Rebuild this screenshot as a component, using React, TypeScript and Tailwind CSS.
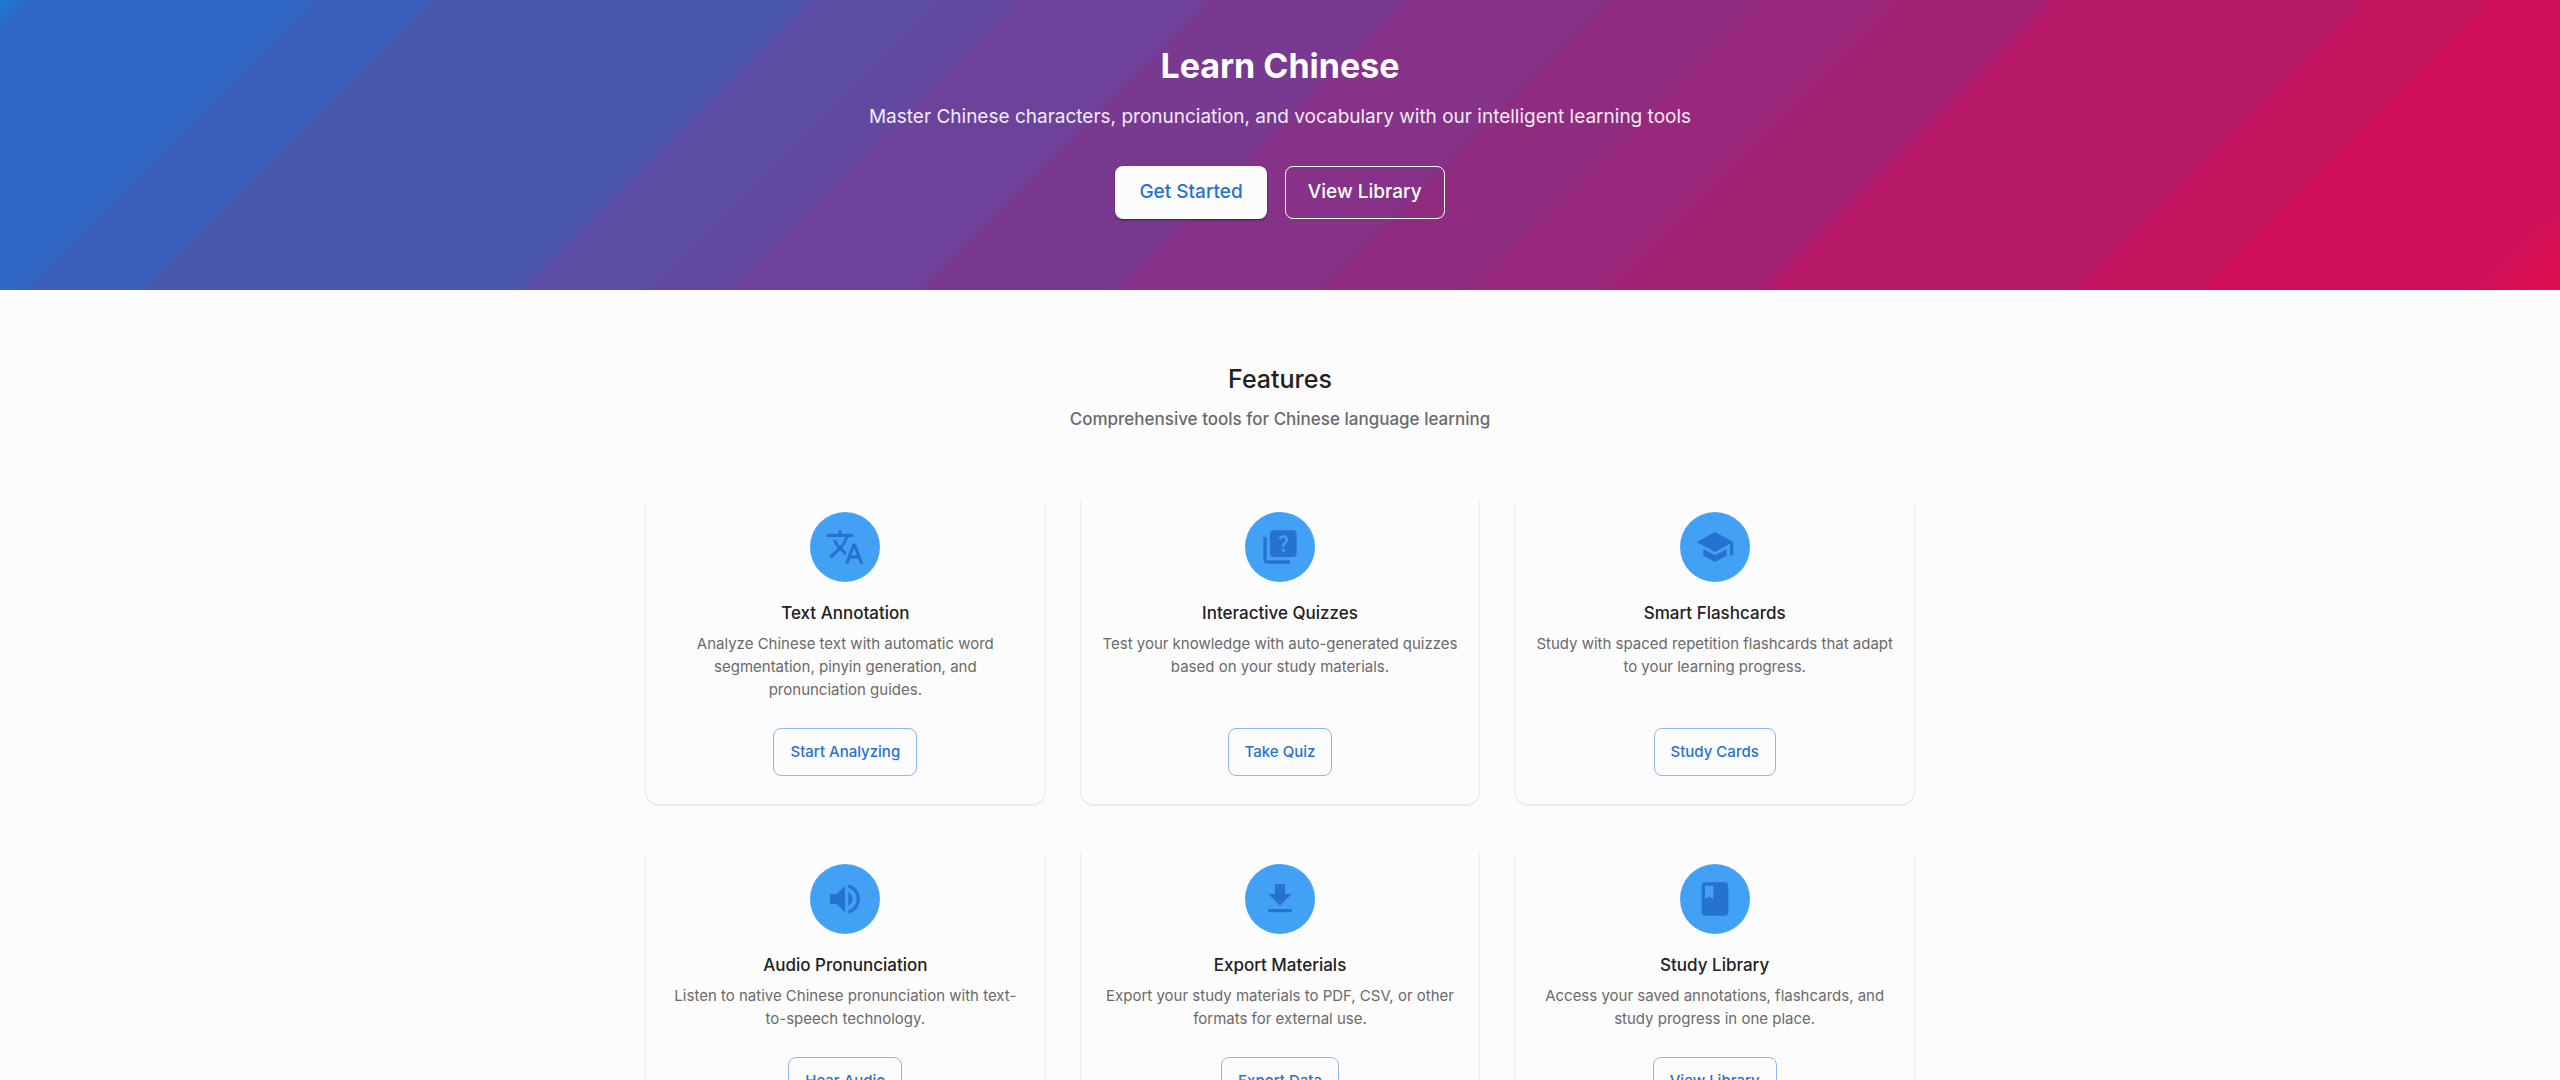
import type { IconType } from "react-icons";
import {
  MdBook,
  MdFileDownload,
  MdQuiz,
  MdSchool,
  MdTranslate,
  MdVolumeUp,
} from "react-icons/md";

type Feature = {
  icon: IconType;
  title: string;
  text: string;
  action: string;
};

const features: Feature[] = [
  {
    icon: MdTranslate,
    title: "Text Annotation",
    text: "Analyze Chinese text with automatic word segmentation, pinyin generation, and pronunciation guides.",
    action: "Start Analyzing",
  },
  {
    icon: MdQuiz,
    title: "Interactive Quizzes",
    text: "Test your knowledge with auto-generated quizzes based on your study materials.",
    action: "Take Quiz",
  },
  {
    icon: MdSchool,
    title: "Smart Flashcards",
    text: "Study with spaced repetition flashcards that adapt to your learning progress.",
    action: "Study Cards",
  },
  {
    icon: MdVolumeUp,
    title: "Audio Pronunciation",
    text: "Listen to native Chinese pronunciation with text-to-speech technology.",
    action: "Hear Audio",
  },
  {
    icon: MdFileDownload,
    title: "Export Materials",
    text: "Export your study materials to PDF, CSV, or other formats for external use.",
    action: "Export Data",
  },
  {
    icon: MdBook,
    title: "Study Library",
    text: "Access your saved annotations, flashcards, and study progress in one place.",
    action: "View Library",
  },
];

function Hero() {
  return (
    <header className="bg-[linear-gradient(135deg,#1f77d1_0.5%,#2e67c4_1%,#2e67c4_10.6%,#3a60bd_11.1%,#3a60bd_14.9%,#4a57af_15.4%,#4a57af_28.1%,#5b4fa5_28.6%,#5b4fa5_32.5%,#6149a1_33%,#6149a1_35.4%,#6c429b_35.9%,#6c429b_42.1%,#783991_42.6%,#783991_49.1%,#853288_49.6%,#853288_56.3%,#902c80_56.8%,#902c80_61.5%,#99277b_62%,#99277b_66.2%,#a22174_66.7%,#a22174_71.7%,#b51a69_72.2%,#b51a69_82.6%,#c1155f_83.1%,#c1155f_87%,#cf1058_87.6%,#cf1058_97%,#e00d4d_100%)] px-6 pt-11 pb-[71px] text-center text-white">
      <h1 className="text-[34px] leading-[44px] font-bold">Learn Chinese</h1>
      <p className="mt-[17px] text-[19px] leading-6 text-white/90">
        Master Chinese characters, pronunciation, and vocabulary with our
        intelligent learning tools
      </p>
      <div className="mt-[37px] flex flex-wrap justify-center gap-[18px]">
        <button
          type="button"
          className="h-[53px] rounded-lg bg-[#fcfcfc] px-6 text-[19px] font-medium text-[#2672d0] shadow-[0_1px_2px_rgba(0,0,0,0.5)]"
        >
          Get Started
        </button>
        <button
          type="button"
          className="h-[53px] rounded-lg border border-white px-[22px] text-[19px] font-medium text-white"
        >
          View Library
        </button>
      </div>
    </header>
  );
}

function FeatureCard({ icon: Icon, title, text, action }: Feature) {
  return (
    <article className="relative flex flex-col items-center px-5 pt-6 pb-[30px] text-center after:pointer-events-none after:absolute after:inset-x-0 after:top-3 after:bottom-0 after:rounded-b-[14px] after:border-x after:border-b-2 after:border-[#ebebeb]">
      <div className="flex size-[70px] items-center justify-center rounded-full bg-[#43a1f5] text-[#2672d0]">
        <Icon className="size-10" aria-hidden="true" />
      </div>
      <h3 className="mt-[19px] text-[17px] leading-6 font-medium text-[#212121]">
        {title}
      </h3>
      <p className="mt-[7px] mb-[27px] text-[15px] leading-[23px] text-[#6a6a6a]">
        {text}
      </p>
      <button
        type="button"
        className="relative z-10 mt-auto h-12 rounded-lg border border-[#8db9ec] px-4 text-[15px] font-medium text-[#2672d0]"
      >
        {action}
      </button>
    </article>
  );
}

export default function App() {
  return (
    <div className="h-screen overflow-hidden bg-[#fcfcfc] font-[Inter,'Liberation_Sans',sans-serif]">
      <Hero />
      <main className="mx-auto max-w-[1318px] px-6 pt-[70px] pb-16">
        <div className="text-center">
          <h2 className="text-[25px] leading-[38px] font-medium text-[#212121]">
            Features
          </h2>
          <p className="mt-[7px] text-[17px] leading-7 font-medium text-[#6a6a6a]">
            Comprehensive tools for Chinese language learning
          </p>
        </div>
        <section
          aria-label="Features"
          className="mt-[55px] grid grid-cols-1 gap-[34px] md:grid-cols-3"
        >
          {features.map((feature) => (
            <FeatureCard key={feature.title} {...feature} />
          ))}
        </section>
      </main>
    </div>
  );
}
